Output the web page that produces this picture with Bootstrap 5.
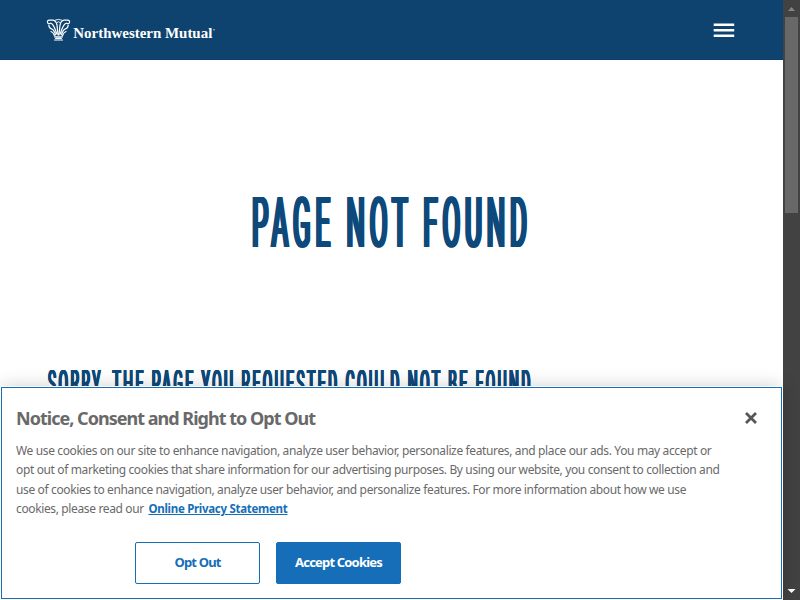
<!DOCTYPE html>
<html lang="en">
<head>
<meta charset="utf-8">
<meta name="viewport" content="width=device-width, initial-scale=1">
<title>Page Not Found | Northwestern Mutual</title>
<link href="https://cdn.jsdelivr.net/npm/bootstrap@5.3.0/dist/css/bootstrap.min.css" rel="stylesheet">
<style>
body{font-family:"Noto Sans","Open Sans",sans-serif;background:#fff}
.viewport{width:800px;height:600px}
.site-bar{height:60px;background:#0e4370;border-bottom:1px solid #0b3e6a;padding:0 48px 0 46px}
.brand-art{width:172px;height:26px}
/* tall condensed display face: shadows thicken only the upright strokes */
.display-text{font-family:Roboto,"Liberation Sans",sans-serif;font-weight:400;color:#0e497b;line-height:1;white-space:nowrap;width:max-content;transform:scaleX(.367);transform-origin:0 0;letter-spacing:.194em;margin:0;
text-shadow:.02em 0,.04em 0,.06em 0,-.02em 0,-.04em 0,-.06em 0}
.page-title{font-size:70px;margin:128px 0 0 252px}
.subtitle{font-size:36px;margin:108px 0 0 48px;transform:scaleX(.376)}
.consent{left:1px;top:387px;width:781px;height:212px;border:1px solid #156eb7;outline:1px solid #fff;box-shadow:0 0 18px rgba(0,0,0,.2);padding:18px 14px 0;color:#696969}
.consent h2{font-size:18px;line-height:24px;font-weight:700;letter-spacing:-.98px;margin:0}
.copy{font-size:13px;line-height:19.4px;margin-top:11px;letter-spacing:-.38px;transform:scaleX(.9205);transform-origin:0 0}
.copy span{display:block;white-space:nowrap;width:max-content}
.copy a{color:#156eb7;font-weight:700;font-size:12.5px;letter-spacing:-.32px;margin-left:2px}
.choices{padding-left:119px;margin-top:23px}
.choice{width:125px;height:42px;border-radius:2px;border:1px solid #156eb7;font-size:13px;font-weight:700;letter-spacing:-.82px;padding:0}
.choice,.choice:hover{color:#156eb7;background:#fff}
.choice.accept{color:#fff;background:#156eb7}
.scroll-track{width:17px;background:#424242}
.scroll-thumb{width:13px;height:196px;background:#686868;margin:0 2px}
</style>
<script src="https://cdn.jsdelivr.net/npm/bootstrap@5.3.0/dist/js/bootstrap.bundle.min.js"></script>
</head>
<body>
<div class="viewport d-flex overflow-hidden position-relative">
<div class="flex-grow-1 position-relative overflow-hidden">
<header class="site-bar d-flex align-items-center justify-content-between">
<a href="#" aria-label="Northwestern Mutual" class="d-flex">
<svg class="brand-art" viewBox="0 0 172 26">
<g fill="none" stroke="#fff" stroke-width="1.2" stroke-linecap="round">
<path d="M4.5 6.2Q2.6 7.3 1.6 5.8Q.8 3.4 3.4 3.2H7Q10 3.6 11 8L12 18M20.5 6.2Q22.4 7.3 23.4 5.8Q24.2 3.4 21.6 3.2H18Q15 3.6 14 8L13 18"/>
<path d="M2.8 8Q3 11.5 5.5 11.8Q8 12.5 9.6 18M22.2 8Q22 11.5 19.5 11.8Q17 12.5 15.4 18M5.5 6.5Q8 8 10.8 17M19.5 6.5Q17 8 14.2 17M5 14.5Q7.5 15.5 8.4 18.5M20 14.5Q17.5 15.5 16.6 18.5"/>
<path d="M9.5 3Q12.5 1.7 15.5 3M11 5.5Q12.5 3.7 14 5.5" stroke-width=".9"/>
<path d="M8.5 19.8H16.5M9.7 21.4H15.3M8.5 23H16.5"/>
</g>
<text x="27.3" y="21.3" fill="#fff" font-family="'Liberation Serif',serif" font-weight="700" font-size="14.2" textLength="139" lengthAdjust="spacingAndGlyphs">Northwestern Mutual</text>
<circle cx="168" cy="12.7" r=".8" fill="#b9cad8"/>
</svg></a>
<button class="btn p-0 border-0 d-flex" aria-label="Menu"><svg width="22" height="16"><path d="M.7 2.7H21.2M.7 8.2H21.2M.7 13.8H21.2" stroke="#fff" stroke-width="2.4"/></svg></button>
</header>
<main class="overflow-hidden">
<h1 class="display-text page-title">PAGE NOT FOUND</h1>
<h2 class="display-text subtitle">SORRY, THE PAGE YOU REQUESTED COULD NOT BE FOUND</h2>
</main>
</div>
<aside class="scroll-track d-flex flex-column align-items-start flex-shrink-0">
<svg width="17" height="17"><path d="M5 11H12L8.5 7Z" fill="#858585"/></svg>
<div class="scroll-thumb"></div>
<svg class="mt-auto" width="17" height="17"><path d="M4.5 6H12.5L8.5 10Z" fill="#fff"/></svg>
</aside>
<section class="consent position-absolute bg-white" role="dialog" aria-label="Cookie notice">
<div class="d-flex justify-content-between align-items-center"><h2>Notice, Consent and Right to Opt Out</h2>
<button class="btn p-0 border-0 d-flex me-2" aria-label="Close"><svg width="16" height="14" viewBox="0 0 16 14"><path d="M3 2L13 12M13 2L3 12" stroke="#565656" stroke-width="2.8"/></svg></button></div>
<div class="copy"><span>We use cookies on our site to enhance navigation, analyze user behavior, personalize features, and place our ads. You may accept or</span>
<span>opt out of marketing cookies that share information for our advertising purposes. By using our website, you consent to collection and</span>
<span>use of cookies to enhance navigation, analyze user behavior, and personalize features. For more information about how we use</span>
<span>cookies, please read our <a href="#">Online Privacy Statement</a></span></div>
<div class="choices d-flex gap-3"><button class="btn choice">Opt Out</button><button class="btn choice accept">Accept Cookies</button></div>
</section>
</div>
</body>
</html>
